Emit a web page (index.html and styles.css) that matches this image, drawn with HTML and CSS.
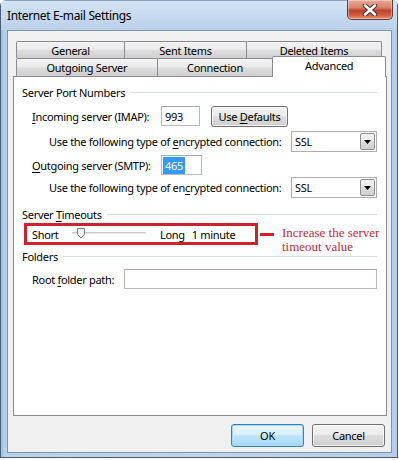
FILE: index.html
```html
<!DOCTYPE html>
<html>
<head>
<meta charset="utf-8">
<link rel="stylesheet" href="styles.css">
</head>
<body>
<div class="window">
  <div class="titlebar">
    <span class="title">Internet E-mail Settings</span>
    <div class="close">
      <svg width="16" height="12" viewBox="0 0 16 12">
        <path d="M3 1.5 L13 10.5 M13 1.5 L3 10.5" stroke="#3a2a2a" stroke-width="4.4" stroke-linecap="round"/>
        <path d="M3 1.5 L13 10.5 M13 1.5 L3 10.5" stroke="#ffffff" stroke-width="2.6" stroke-linecap="round"/>
      </svg>
    </div>
  </div>
  <div class="client">
    <div class="tabs">
      <div class="tabrow row1">
        <div class="tab t-general">General</div>
        <div class="tab t-sent">Sent Items</div>
        <div class="tab t-deleted">Deleted Items</div>
      </div>
      <div class="tabrow row2">
        <div class="tab t-outgoing">Outgoing Server</div>
        <div class="tab t-connection">Connection</div>
        <div class="tab t-advanced selected">Advanced</div>
      </div>
    </div>
    <div class="panel">
      <div class="group-header"><span>Server Port Numbers</span><div class="gline"></div></div>
      <div class="row r-imap">
        <span class="label lbl-port"><u>I</u>ncoming server (IMAP):</span>
        <div class="textbox tb-imap">993</div>
        <div class="button btn-defaults"><span>Use <u>D</u>efaults</span></div>
      </div>
      <div class="row r-enc r-enc1">
        <span class="label">Use the following type of <u>e</u>ncrypted connection:</span>
        <div class="select"><span class="sel-text">SSL</span><div class="drop"><svg width="7" height="4" viewBox="0 0 7 4"><path d="M0 0 H7 L3.5 4 Z" fill="#000"/></svg></div></div>
      </div>
      <div class="row r-smtp">
        <span class="label lbl-port"><u>O</u>utgoing server (SMTP):</span>
        <div class="textbox tb-smtp"><span class="hl">465</span></div>
      </div>
      <div class="row r-enc r-enc2">
        <span class="label">Use the following type of en<u>c</u>rypted connection:</span>
        <div class="select"><span class="sel-text">SSL</span><div class="drop"><svg width="7" height="4" viewBox="0 0 7 4"><path d="M0 0 H7 L3.5 4 Z" fill="#000"/></svg></div></div>
      </div>
      <div class="group-header gh-timeouts"><span>Server <u>T</u>imeouts</span><div class="gline"></div></div>
      <div class="row r-timeout">
        <div class="redbox">
          <span class="short">Short</span>
          <div class="slider">
            <div class="track"></div>
            <svg class="thumb" width="9" height="11" viewBox="0 0 9 11">
              <path d="M0.5 0.5 H7.5 V6.5 L4 10 L0.5 6.5 Z" fill="#f4f4f4" stroke="#7a7a7a"/>
            </svg>
          </div>
          <span class="long">Long</span>
          <span class="minute">1 minute</span>
        </div>
        <div class="redline"></div>
        <div class="note">
          <div class="note-line">Increase the server</div>
          <div class="note-line">timeout value</div>
        </div>
      </div>
      <div class="group-header gh-folders"><span>Folders</span><div class="gline"></div></div>
      <div class="row r-root">
        <span class="label lbl-root">Root <u>f</u>older path:</span>
        <div class="textbox tb-root"></div>
      </div>
    </div>
    <div class="buttons">
      <div class="button btn-ok">OK</div>
      <div class="button btn-cancel">Cancel</div>
    </div>
  </div>
</div>
</body>
</html>
```

FILE: styles.css
```css
* { box-sizing: border-box; }
html, body { margin: 0; padding: 0; background: #ffffff; }
body {
  width: 399px;
  height: 460px;
  font-family: "Noto Sans", "Open Sans", sans-serif;
  font-size: 11px;
  letter-spacing: -0.3px;
  color: #000;
  overflow: hidden;
}
u { text-decoration: underline; text-underline-offset: 2px; }

.window {
  width: 398px;
  height: 458px;
  border: 1px solid #4b5d72;
  border-top-color: #8aa2bb;
  border-radius: 6px 6px 0 0;
  background: linear-gradient(to right, #9fbfe0 0px, #b7d0ea 4px, #c0d6ed 50%, #b5cde8 100%);
  padding: 0 5px 4px 6px;
  display: flex;
  flex-direction: column;
}

.titlebar {
  height: 29px;
  display: flex;
  align-items: flex-start;
  justify-content: space-between;
  background: linear-gradient(to bottom, #d3e3f3 0%, #c6daef 50%, #b9d1ea 100%);
  margin: 0 -5px 0 -6px;
  padding: 0 4px 0 6px;
}
.title {
  margin-top: 6px;
  font-size: 12px;
  letter-spacing: -0.35px;
  color: #000;
}
.close {
  width: 46px;
  height: 20px;
  margin-top: -1px;
  border: 1px solid #6b3b32;
  border-top: none;
  border-radius: 0 0 5px 5px;
  background: linear-gradient(to bottom, #e9a99a 0%, #d9826c 40%, #c2432b 55%, #cf5d44 80%, #e2937d 100%);
  display: flex;
  align-items: center;
  justify-content: center;
  box-shadow: inset 0 0 0 1px rgba(255,255,255,0.35);
}

.client {
  flex: 1;
  background: #f0f0f0;
  border: 1px solid #7f93a8;
  padding: 10px 5px 5px 5px;
  display: flex;
  flex-direction: column;
}

.tabs { height: 35px; padding-left: 3px; }
.tabrow { display: flex; align-items: flex-start; }
.row1 { height: 17px; }
.row2 { height: 18px; }
.tab {
  border: 1px solid #898c95;
  border-bottom: none;
  border-radius: 2px 2px 0 0;
  background: linear-gradient(to bottom, #f3f3f3 0%, #ebebeb 45%, #dcdcdc 55%, #cfcfcf 100%);
  display: flex;
  align-items: center;
  justify-content: center;
  line-height: 1;
}
.tab + .tab { margin-left: -1px; }
.row1 .tab { height: 17px; }
.row2 .tab { height: 18px; }
.t-general { width: 109px; }
.t-sent { width: 123px; }
.t-deleted { width: 136px; }
.t-outgoing { width: 142px; }
.t-connection { width: 117px; }
.t-advanced { width: 114px; }
.row2 .tab.selected {
  height: 21px;
  margin-top: -2px;
  background: #ffffff;
  position: relative;
  z-index: 1;
  align-items: flex-start;
  padding-top: 3px;
}

.panel {
  width: 374px;
  height: 340px;
  background: #ffffff;
  border: 1px solid #898c95;
  padding: 7px 9px 0 8px;
}

.group-header {
  height: 16px;
  display: flex;
  align-items: center;
  white-space: nowrap;
}
.gline {
  flex: 1;
  height: 1px;
  background: #d5dfe5;
  margin-left: 5px;
}
.gh-timeouts { margin-top: 8px; }
.gh-folders { margin-top: 3px; }

.row {
  display: flex;
  align-items: center;
  white-space: nowrap;
}
.label { flex: none; }
.r-imap { margin-top: 6px; height: 20px; padding-left: 10px; }
.r-enc { height: 21px; padding-left: 27px; }
.r-enc1 { margin-top: 5px; }
.r-smtp { margin-top: 3px; height: 20px; padding-left: 10px; }
.r-enc2 { margin-top: 2px; }
.r-timeout { margin-top: 1px; height: 22px; padding-left: 2px; position: relative; }
.r-root { margin-top: 5px; height: 20px; padding-left: 10px; }

.lbl-port { width: 129px; }
.lbl-root { width: 92px; }

.textbox {
  height: 20px;
  border: 1px solid #b5b9c0;
  border-top-color: #a3a7ae;
  background: #fff;
  display: flex;
  align-items: center;
  padding-left: 3px;
}
.tb-imap { width: 39px; }
.tb-smtp { width: 41px; padding-left: 1px; }
.tb-root { flex: 1; }
.hl { background: #3399ff; color: #fff; padding: 1px 2px 1px 2px; }

.button {
  border: 1px solid #707070;
  border-radius: 3px;
  background: linear-gradient(to bottom, #f2f2f2 0%, #ebebeb 45%, #dddddd 50%, #cfcfcf 100%);
  box-shadow: inset 0 0 0 1px rgba(255,255,255,0.7);
  display: flex;
  align-items: center;
  justify-content: center;
  white-space: nowrap;
}
.btn-defaults { width: 77px; height: 21px; margin-left: 11px; }

.select {
  flex: none;
  margin-left: auto;
  width: 86px;
  height: 21px;
  border: 1px solid #abadb3;
  background: #fff;
  display: flex;
  align-items: center;
  justify-content: space-between;
  padding: 1px 1px 1px 2px;
}
.sel-text { padding-left: 1px; }
.drop {
  width: 15px;
  height: 17px;
  border: 1px solid #8f8f8f;
  border-radius: 2px;
  background: linear-gradient(to bottom, #f2f2f2 0%, #ebebeb 45%, #dddddd 50%, #cfcfcf 100%);
  display: flex;
  align-items: center;
  justify-content: center;
}

.redbox {
  flex: none;
  width: 234px;
  height: 22px;
  border: 3px solid #d2202f;
  display: flex;
  align-items: center;
  padding-left: 5px;
}
.short { width: 40px; }
.slider { width: 74px; height: 12px; position: relative; }
.track {
  position: absolute;
  left: 0; right: 0; top: 4px;
  height: 2px;
  border-top: 1px solid #c9c9c9;
  border-bottom: 1px solid #e9e9e9;
}
.thumb { position: absolute; left: 5px; top: 0; }
.long { margin-left: 14px; }
.minute { margin-left: 7px; }

.redline {
  flex: none;
  width: 14px;
  height: 3px;
  background: #d2202f;
  margin-left: 2px;
}
.note {
  position: absolute;
  left: 260px;
  top: 3px;
  font-family: "Liberation Serif", "DejaVu Serif", serif;
  font-size: 13px;
  letter-spacing: 0;
  color: #c8283c;
  white-space: nowrap;
}
.note-line { height: 13px; line-height: 13px; overflow: visible; }
.note-line + .note-line { margin-top: 1px; }

.buttons {
  margin-top: 8px;
  display: flex;
  justify-content: flex-end;
  gap: 8px;
  padding-right: 1px;
}
.btn-ok, .btn-cancel { width: 73px; height: 23px; }
.btn-ok {
  border-color: #3c7fb1;
  background: linear-gradient(to bottom, #eaf6fd 0%, #d9f0fc 45%, #bee6fd 50%, #a7d9f5 100%);
  box-shadow: inset 0 0 0 1px #9fdcfb;
}
```
